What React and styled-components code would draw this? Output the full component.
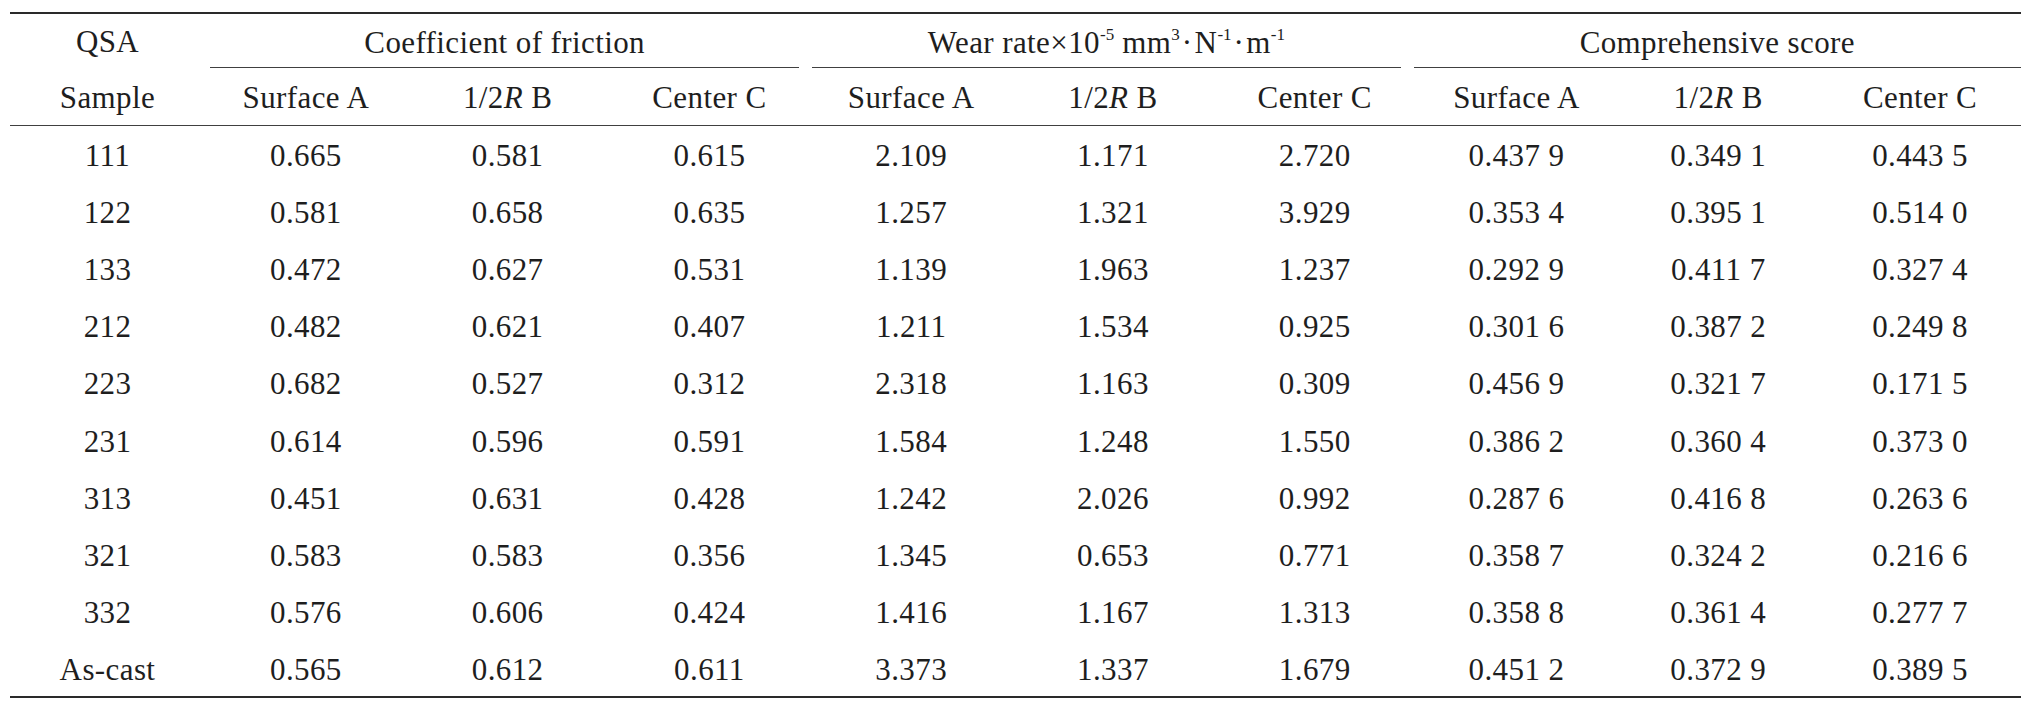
import React from 'react';
import styled, { createGlobalStyle } from 'styled-components';

const GlobalStyle = createGlobalStyle`
  html, body {
    margin: 0;
    padding: 0;
    background: #ffffff;
  }
  body {
    font-family: "Liberation Serif", "Times New Roman", serif;
    color: #1e1e1e;
  }
`;

const Page = styled.div`
  padding: 12px 0 0 10px;
`;

const Table = styled.table`
  width: 2011px;
  table-layout: fixed;
  border-collapse: collapse;
  border-top: 2.5px solid #2a2a2a;
  border-bottom: 2.5px solid #2a2a2a;
  font-family: "Liberation Serif", "Times New Roman", serif;
  font-size: 31px;
  letter-spacing: 0.4px;
  line-height: 30px;
  color: #1e1e1e;
`;

const HeadRow = styled.tr`
  height: ${props => props.h}px;
  border-bottom: ${props => (props.last ? '1.5px solid #404040' : 'none')};
`;

const HeadCell = styled.th`
  font-family: "Liberation Serif", "Times New Roman", serif;
  font-weight: normal;
  padding: ${props => (props.top ? '0' : '4px 0 0')};
  text-align: center;
  vertical-align: ${props => (props.top ? 'top' : 'middle')};
`;

const GroupLabel = styled.div`
  margin: 0 ${props => props.mr}px 0 ${props => props.ml}px;
  padding: 14px 0 9px;
  border-bottom: 1.3px solid #404040;
  white-space: nowrap;
`;

const QsaLabel = styled.div`
  padding: 13px 0 9px;
`;

const Row = styled.tr`
  height: 57.2px;
`;

const Cell = styled.td`
  font-family: "Liberation Serif", "Times New Roman", serif;
  padding: 4px 0 0;
  text-align: center;
  vertical-align: middle;
  white-space: pre;
`;

const Sup = styled.sup`
  font-size: 0.55em;
  letter-spacing: 0;
  vertical-align: 0.78em;
  line-height: 0;
`;

const Dot = styled.span`
  margin: 0 2px;
`;

const cols = ['Surface A', '1/2R B', 'Center C'];

const rows = [
  ['111', '0.665', '0.581', '0.615', '2.109', '1.171', '2.720', '0.437 9', '0.349 1', '0.443 5'],
  ['122', '0.581', '0.658', '0.635', '1.257', '1.321', '3.929', '0.353 4', '0.395 1', '0.514 0'],
  ['133', '0.472', '0.627', '0.531', '1.139', '1.963', '1.237', '0.292 9', '0.411 7', '0.327 4'],
  ['212', '0.482', '0.621', '0.407', '1.211', '1.534', '0.925', '0.301 6', '0.387 2', '0.249 8'],
  ['223', '0.682', '0.527', '0.312', '2.318', '1.163', '0.309', '0.456 9', '0.321 7', '0.171 5'],
  ['231', '0.614', '0.596', '0.591', '1.584', '1.248', '1.550', '0.386 2', '0.360 4', '0.373 0'],
  ['313', '0.451', '0.631', '0.428', '1.242', '2.026', '0.992', '0.287 6', '0.416 8', '0.263 6'],
  ['321', '0.583', '0.583', '0.356', '1.345', '0.653', '0.771', '0.358 7', '0.324 2', '0.216 6'],
  ['332', '0.576', '0.606', '0.424', '1.416', '1.167', '1.313', '0.358 8', '0.361 4', '0.277 7'],
  ['As-cast', '0.565', '0.612', '0.611', '3.373', '1.337', '1.679', '0.451 2', '0.372 9', '0.389 5'],
];

const SubHead = ({ label }) => {
  if (label === '1/2R B') {
    return (
      <HeadCell>
        1/2<i>R</i> B
      </HeadCell>
    );
  }
  return <HeadCell>{label}</HeadCell>;
};

const WearLabel = () => (
  <>
    Wear rate×10<Sup>-5</Sup> mm<Sup>3</Sup>
    <Dot>·</Dot>N<Sup>-1</Sup>
    <Dot>·</Dot>m<Sup>-1</Sup>
  </>
);

export default function App() {
  return (
    <Page>
      <GlobalStyle />
      <Table>
        <colgroup>
          <col style={{ width: 195 }} />
          {Array.from({ length: 9 }).map((_, i) => (
            <col key={i} />
          ))}
        </colgroup>
        <thead>
          <HeadRow h={54}>
            <HeadCell top>
              <QsaLabel>QSA</QsaLabel>
            </HeadCell>
            <HeadCell colSpan={3} top>
              <GroupLabel ml={5} mr={11}>
                Coefficient of friction
              </GroupLabel>
            </HeadCell>
            <HeadCell colSpan={3} top>
              <GroupLabel ml={2} mr={15}>
                <WearLabel />
              </GroupLabel>
            </HeadCell>
            <HeadCell colSpan={3} top>
              <GroupLabel ml={-2} mr={0}>
                Comprehensive score
              </GroupLabel>
            </HeadCell>
          </HeadRow>
          <HeadRow h={57} last>
            <HeadCell>Sample</HeadCell>
            {[0, 1, 2].map(g =>
              cols.map(c => <SubHead key={g + c} label={c} />)
            )}
          </HeadRow>
        </thead>
        <tbody>
          {rows.map(r => (
            <Row key={r[0]}>
              {r.map((v, i) => (
                <Cell key={i}>{v}</Cell>
              ))}
            </Row>
          ))}
        </tbody>
      </Table>
    </Page>
  );
}
